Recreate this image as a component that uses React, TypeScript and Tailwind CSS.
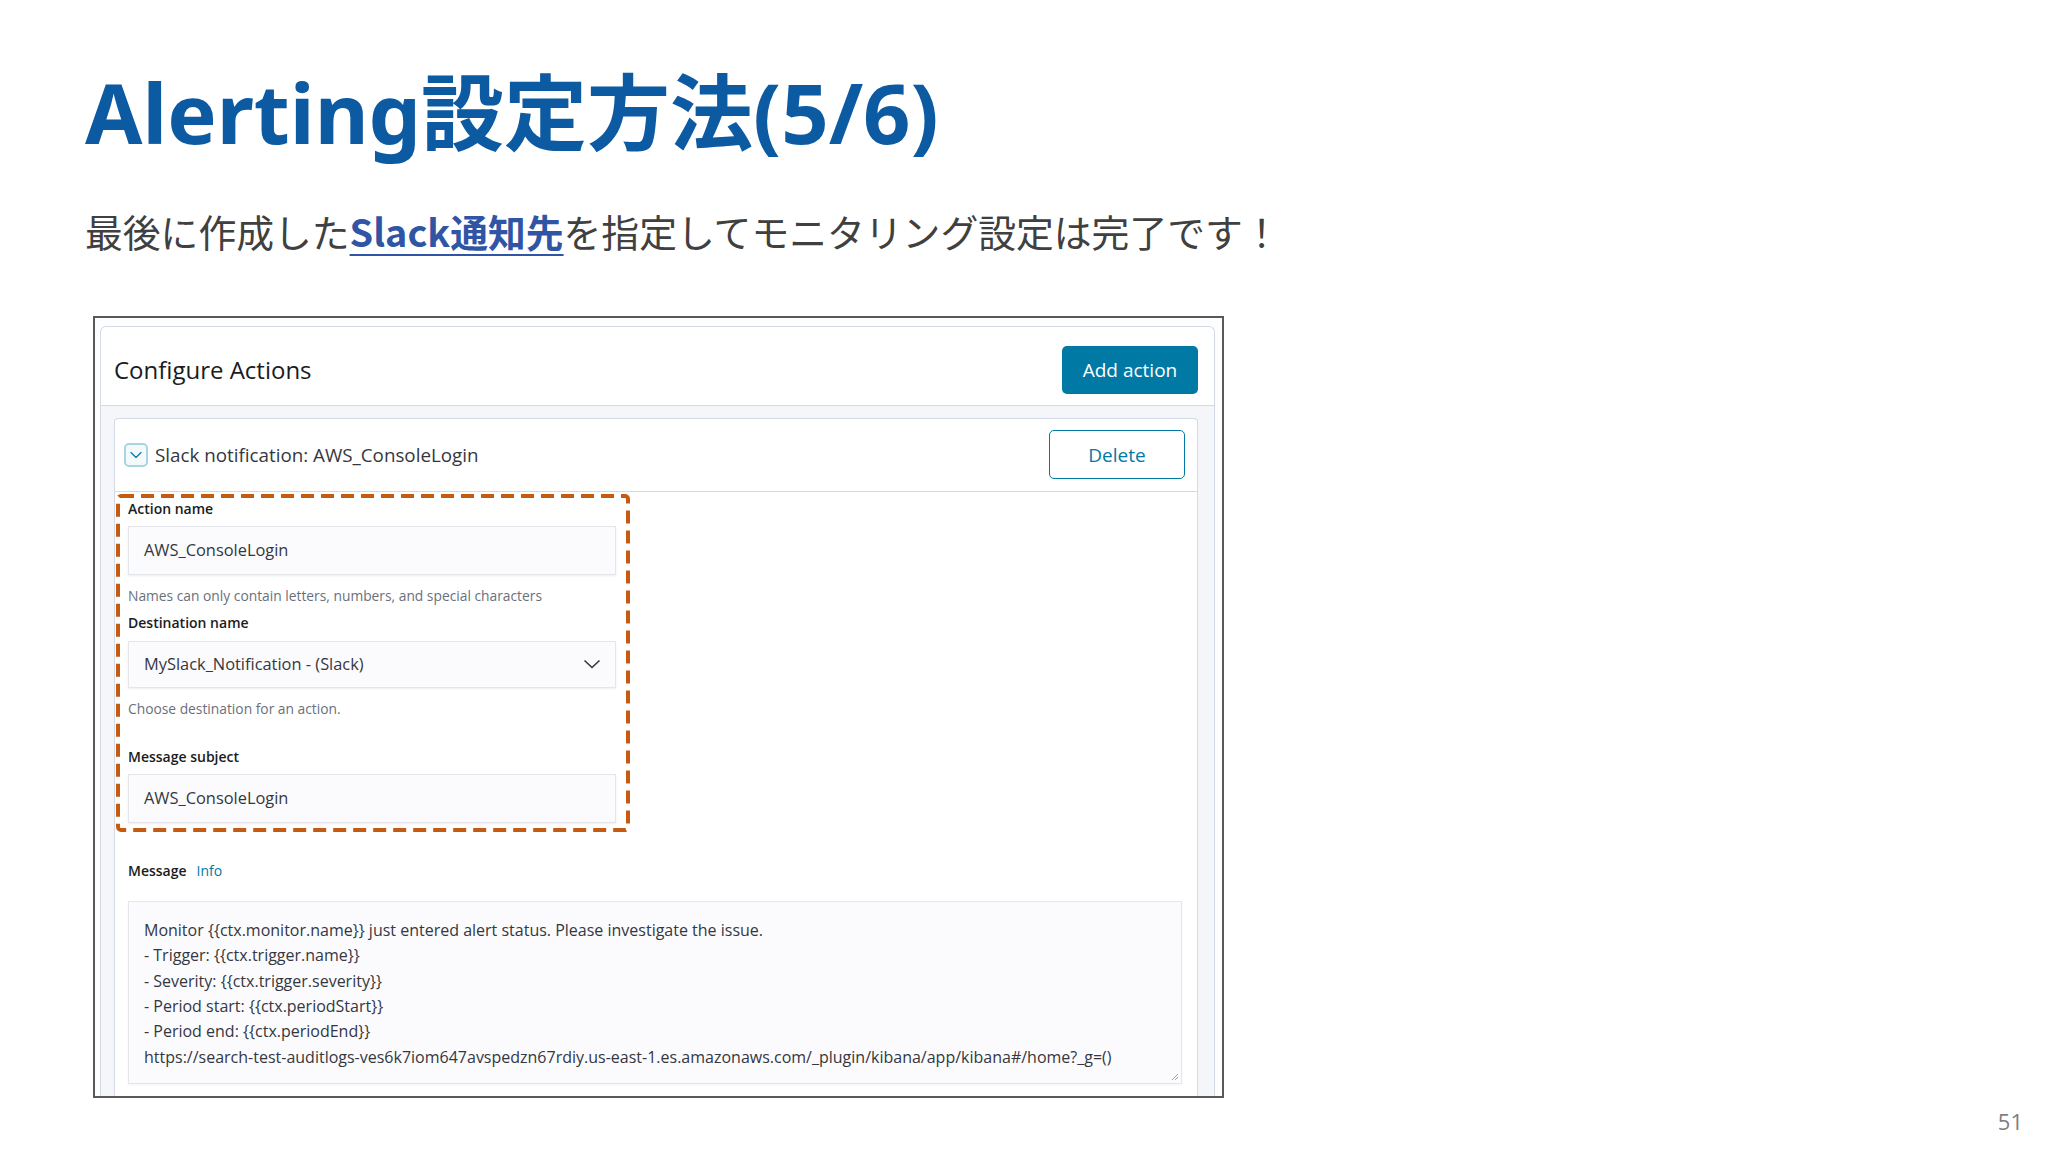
import { ChevronDown } from 'lucide-react';

const ui = "font-['Open_Sans','Noto_Sans',sans-serif]";

const lines = [
  'Monitor {{ctx.monitor.name}} just entered alert status. Please investigate the issue.',
  '- Trigger: {{ctx.trigger.name}}',
  '- Severity: {{ctx.trigger.severity}}',
  '- Period start: {{ctx.periodStart}}',
  '- Period end: {{ctx.periodEnd}}',
  'https://search-test-auditlogs-ves6k7iom647avspedzn67rdiy.us-east-1.es.amazonaws.com/_plugin/kibana/app/kibana#/home?_g=()',
];

function Label({ children, className = '' }: { children: React.ReactNode; className?: string }) {
  return (
    <div className={`h-[22px] text-[14px] leading-[22px] font-semibold text-[#1a1c21] ${className}`}>
      {children}
    </div>
  );
}

function Help({ children, className = '' }: { children: React.ReactNode; className?: string }) {
  return <div className={`h-[20px] text-[13.8px] leading-[20px] text-[#69707d] ${className}`}>{children}</div>;
}

function TextInput({ value, className = '' }: { value: string; className?: string }) {
  return (
    <div
      className={`flex h-[49px] w-[488px] items-center border border-[#e3e6eb] bg-[#fbfbfd] pl-[15px] text-[16.4px] text-[#343741] shadow-[0_1px_2px_rgba(0,0,0,0.07)] ${className}`}
    >
      {value}
    </div>
  );
}

export default function App() {
  return (
    <div className="flex h-[1152px] w-[2048px] flex-col overflow-hidden bg-white">
      <h1 className="mt-[70px] pl-[85px] font-['Noto_Sans','Noto_Sans_CJK_JP',sans-serif] text-[83px] leading-none font-bold text-[#0b5aa2]">
        Alerting設定方法(5/6)
      </h1>

      <p className="mt-[59px] pl-[85px] font-['Noto_Sans_CJK_JP',sans-serif] text-[37.8px] leading-none text-[#404040]">
        最後に作成した
        <span className="font-bold text-[#2f55a4] underline decoration-2 underline-offset-[7px]">Slack通知先</span>
        を指定してモニタリング設定は完了です！
      </p>

      <div
        className={`mt-[66px] ml-[93px] h-[782px] w-[1131px] overflow-hidden border-2 border-[#595959] bg-[#fdfcff] pt-[8px] pr-[7px] pl-[5px] ${ui}`}
      >
        <div className="rounded-t-[6px] border border-b-0 border-[#d3dae6] bg-white">
          <div className="flex h-[79px] items-center justify-between border-b border-[#d3dae6] pt-[8px] pr-[16px] pl-[13px]">
            <h2 className="text-[24px] font-medium text-[#1a1c21]">Configure Actions</h2>
            <button className="flex h-[48px] w-[136px] items-center justify-center rounded-[5px] bg-[#0079a5] text-[19px] text-white">
              Add action
            </button>
          </div>

          <div className="bg-[#f5f6f9] pt-[12px] pr-[16px] pl-[13px]">
            <div className="rounded-t-[4px] border border-b-0 border-[#d3dae6] bg-white">
              <div className="flex h-[73px] items-center justify-between border-b border-[#d3dae6] pr-[12px] pl-[9px]">
                <div className="flex items-center gap-[7px]">
                  <span className="flex h-[24px] w-[24px] items-center justify-center rounded-[5px] border-2 border-[#a9d4e0] bg-[#f4fafc]">
                    <ChevronDown size={20} strokeWidth={1.4} className="text-[#0079a5]" />
                  </span>
                  <span className="text-[18.8px] text-[#343741]">Slack notification: AWS_ConsoleLogin</span>
                </div>
                <button className="flex h-[49px] w-[136px] items-center justify-center rounded-[5px] border-[1.5px] border-[#0079a5] bg-white text-[19px] text-[#0079a5]">
                  Delete
                </button>
              </div>

              <div className="pb-[40px]">
                <div className="relative mt-[2px] ml-[1px] h-[338px] w-[514px] pt-[4px] pl-[12px]">
                  <svg className="pointer-events-none absolute inset-0" width="514" height="338" viewBox="0 0 514 338">
                    <rect
                      x="2"
                      y="2"
                      width="510"
                      height="334"
                      rx="3"
                      fill="none"
                      stroke="#c55a11"
                      strokeWidth="4"
                      strokeDasharray="13 7"
                    />
                  </svg>
                  <Label>Action name</Label>
                  <TextInput value="AWS_ConsoleLogin" className="mt-[6px]" />
                  <Help className="mt-[11px]">Names can only contain letters, numbers, and special characters</Help>
                  <Label className="mt-[6px]">Destination name</Label>
                  <div className="mt-[7px] flex h-[47px] w-[488px] items-center justify-between border border-[#e3e6eb] bg-[#fbfbfd] pr-[14px] pl-[15px] text-[16.4px] text-[#343741] shadow-[0_1px_2px_rgba(0,0,0,0.07)]">
                    <span>MySlack_Notification - (Slack)</span>
                    <svg width="18" height="10" viewBox="0 0 18 10">
                      <path d="M1.5 1.5 L9 8.5 L16.5 1.5" fill="none" stroke="#343741" strokeWidth="1.6" />
                    </svg>
                  </div>
                  <Help className="mt-[11px]">Choose destination for an action.</Help>
                  <Label className="mt-[27px]">Message subject</Label>
                  <TextInput value="AWS_ConsoleLogin" className="mt-[6px]" />
                </div>

                <div className="mt-[28px] ml-[13px] flex h-[22px] items-center gap-[10px]">
                  <span className="text-[14px] font-semibold text-[#1a1c21]">Message</span>
                  <span className="text-[14px] text-[#0079a5]">Info</span>
                </div>

                <div className="relative mt-[19px] ml-[13px] h-[183px] w-[1054px] border border-[#e3e6eb] bg-[#fbfbfd] pt-[16px] pl-[15px] text-[16px] leading-[25.4px] text-[#343741] shadow-[0_1px_2px_rgba(0,0,0,0.05)]">
                  {lines.map((l) => (
                    <div key={l} className="whitespace-pre">
                      {l}
                    </div>
                  ))}
                  <svg className="absolute right-[2px] bottom-[2px]" width="9" height="9" viewBox="0 0 9 9">
                    <path d="M8 2 L2 8 M8 5 L5 8" stroke="#a0a4ab" strokeWidth="1" />
                  </svg>
                </div>
              </div>
            </div>
          </div>
        </div>
      </div>

      <div className="mt-[7px] flex justify-end pr-[25px] font-['Open_Sans',sans-serif] text-[22px] text-[#7f7f7f]">
        51
      </div>
    </div>
  );
}
